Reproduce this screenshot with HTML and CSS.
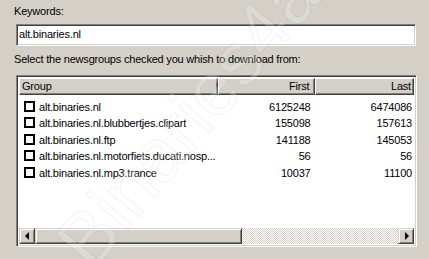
FILE: index.html
```html
<!DOCTYPE html>
<html lang="en">
<head>
  <meta charset="UTF-8" />
  <title>Newsgroup search</title>
  <link rel="stylesheet" href="styles.css">
</head>
<body>
  <div class="screen">
    <div class="dialog">
      <div class="label label-keywords">Keywords:</div>
      <div class="textbox">alt.binaries.nl</div>

      <div class="label label-select">Select the newsgroups checked you whish to download from:</div>

      <div class="listview">
        <div class="list-header">
          <div class="col-head col-group">Group</div>
          <div class="col-head col-num">First</div>
          <div class="col-head col-num col-last">Last</div>
        </div>

        <div class="list-body">
          <div class="row">
            <div class="cell cell-group"><span class="check"></span>alt.binaries.nl</div>
            <div class="cell cell-first">6125248</div>
            <div class="cell cell-last">6474086</div>
          </div>
          <div class="row">
            <div class="cell cell-group"><span class="check"></span>alt.binaries.nl.blubbertjes.clipart</div>
            <div class="cell cell-first">155098</div>
            <div class="cell cell-last">157613</div>
          </div>
          <div class="row">
            <div class="cell cell-group"><span class="check"></span>alt.binaries.nl.ftp</div>
            <div class="cell cell-first">141188</div>
            <div class="cell cell-last">145053</div>
          </div>
          <div class="row">
            <div class="cell cell-group"><span class="check"></span>alt.binaries.nl.motorfiets.ducati.nosp...</div>
            <div class="cell cell-first">56</div>
            <div class="cell cell-last">56</div>
          </div>
          <div class="row">
            <div class="cell cell-group"><span class="check"></span>alt.binaries.nl.mp3.trance</div>
            <div class="cell cell-first">10037</div>
            <div class="cell cell-last">11100</div>
          </div>
        </div>

        <div class="hscroll">
          <div class="sb-btn"><span class="arrow arrow-left"></span></div>
          <div class="sb-thumb"></div>
          <div class="sb-track"></div>
          <div class="sb-btn"><span class="arrow arrow-right"></span></div>
        </div>
      </div>
    </div>

    <!-- watermark over the screenshot -->
    <div class="watermark">&copy; Binaries4all</div>
  </div>
</body>
</html>
```

FILE: styles.css
```css
body {
  margin: 0;
  background-color: #d4d0c8;
  font-family: "Liberation Sans", Arial, sans-serif;
  font-size: 11px;
  letter-spacing: -0.2px;
  color: #000;
}

.screen {
  position: relative;
  width: 429px;
  height: 259px;
  overflow: hidden;
}

.dialog {
  display: flex;
  flex-direction: column;
}

.label {
  line-height: 13px;
  padding-left: 14px;
}

.label-keywords {
  height: 24px;
  box-sizing: border-box;
  padding-top: 5px;
}

.label-select {
  height: 29px;
  box-sizing: border-box;
  padding-top: 7px;
}

/* sunken edit box */
.textbox {
  margin-left: 16px;
  width: 400px;
  height: 22px;
  box-sizing: border-box;
  background: #fff;
  border: 1px solid;
  border-color: #808080 #fff #fff #808080;
  box-shadow: inset 1px 1px #404040, inset -1px -1px #d4d0c8;
  padding: 3px 0 0 2px;
  line-height: 13px;
}

/* list view */
.listview {
  margin-left: 16px;
  width: 401px;
  height: 172px;
  box-sizing: border-box;
  background: #fff;
  border: 1px solid;
  border-color: #808080 #fff #fff #808080;
  box-shadow: inset 1px 1px #404040, inset -1px -1px #d4d0c8;
  padding: 2px;
  display: flex;
  flex-direction: column;
}

.list-header {
  display: flex;
  height: 17px;
  flex: none;
}

.col-head {
  box-sizing: border-box;
  background: #d4d0c8;
  border-top: 1px solid #fff;
  border-left: 1px solid #fff;
  box-shadow: inset -1px -1px #808080;
  border-right: 1px solid #404040;
  border-bottom: 1px solid #404040;
  line-height: 14px;
  padding: 0 5px 0 2px;
}

.col-group {
  width: 200px;
}

.col-num {
  width: 98px;
  text-align: right;
}

.col-last {
  width: 99px;
  padding-right: 2px;
}

.list-body {
  flex: 1;
  padding-top: 4px;
}

.row {
  display: flex;
  height: 16.5px;
  align-items: center;
}

.cell {
  box-sizing: border-box;
  white-space: nowrap;
  line-height: 13px;
}

.cell-group {
  width: 200px;
  display: flex;
  align-items: center;
  padding-left: 5px;
}

.cell-first {
  width: 98px;
  text-align: right;
  padding-right: 5px;
}

.cell-last {
  width: 99px;
  text-align: right;
  padding-right: 2px;
}

.check {
  width: 11px;
  height: 11px;
  box-sizing: border-box;
  border: 2px solid #000;
  background: #fff;
  margin-right: 4px;
  flex: none;
  position: relative;
  top: -1px;
}

/* horizontal scroll bar */
.hscroll {
  display: flex;
  height: 16px;
  flex: none;
}

.sb-btn,
.sb-thumb {
  box-sizing: border-box;
  background: #d4d0c8;
  border-top: 1px solid #d4d0c8;
  border-left: 1px solid #d4d0c8;
  border-right: 1px solid #404040;
  border-bottom: 1px solid #404040;
  box-shadow: inset 1px 1px #fff, inset -1px -1px #808080;
}

.sb-btn {
  width: 16px;
  display: flex;
  align-items: center;
  justify-content: center;
}

.sb-thumb {
  width: 207px;
}

.sb-track {
  flex: 1;
  background: repeating-conic-gradient(#fff 0 25%, #d4d0c8 0 50%) 0 0 / 2px 2px;
}

.arrow {
  width: 0;
  height: 0;
  border-top: 4px solid transparent;
  border-bottom: 4px solid transparent;
}

.arrow-left {
  border-right: 4px solid #000;
  margin-right: 1px;
}

.arrow-right {
  border-left: 4px solid #000;
  margin-left: 1px;
}

.watermark {
  position: absolute;
  left: -60px;
  top: 95px;
  width: 460px;
  font-size: 76px;
  letter-spacing: 0;
  white-space: nowrap;
  color: rgba(255, 255, 255, 0.22);
  -webkit-text-stroke: 1px rgba(0, 0, 0, 0.06);
  transform: rotate(-50deg);
  transform-origin: 50% 50%;
  pointer-events: none;
}
```
